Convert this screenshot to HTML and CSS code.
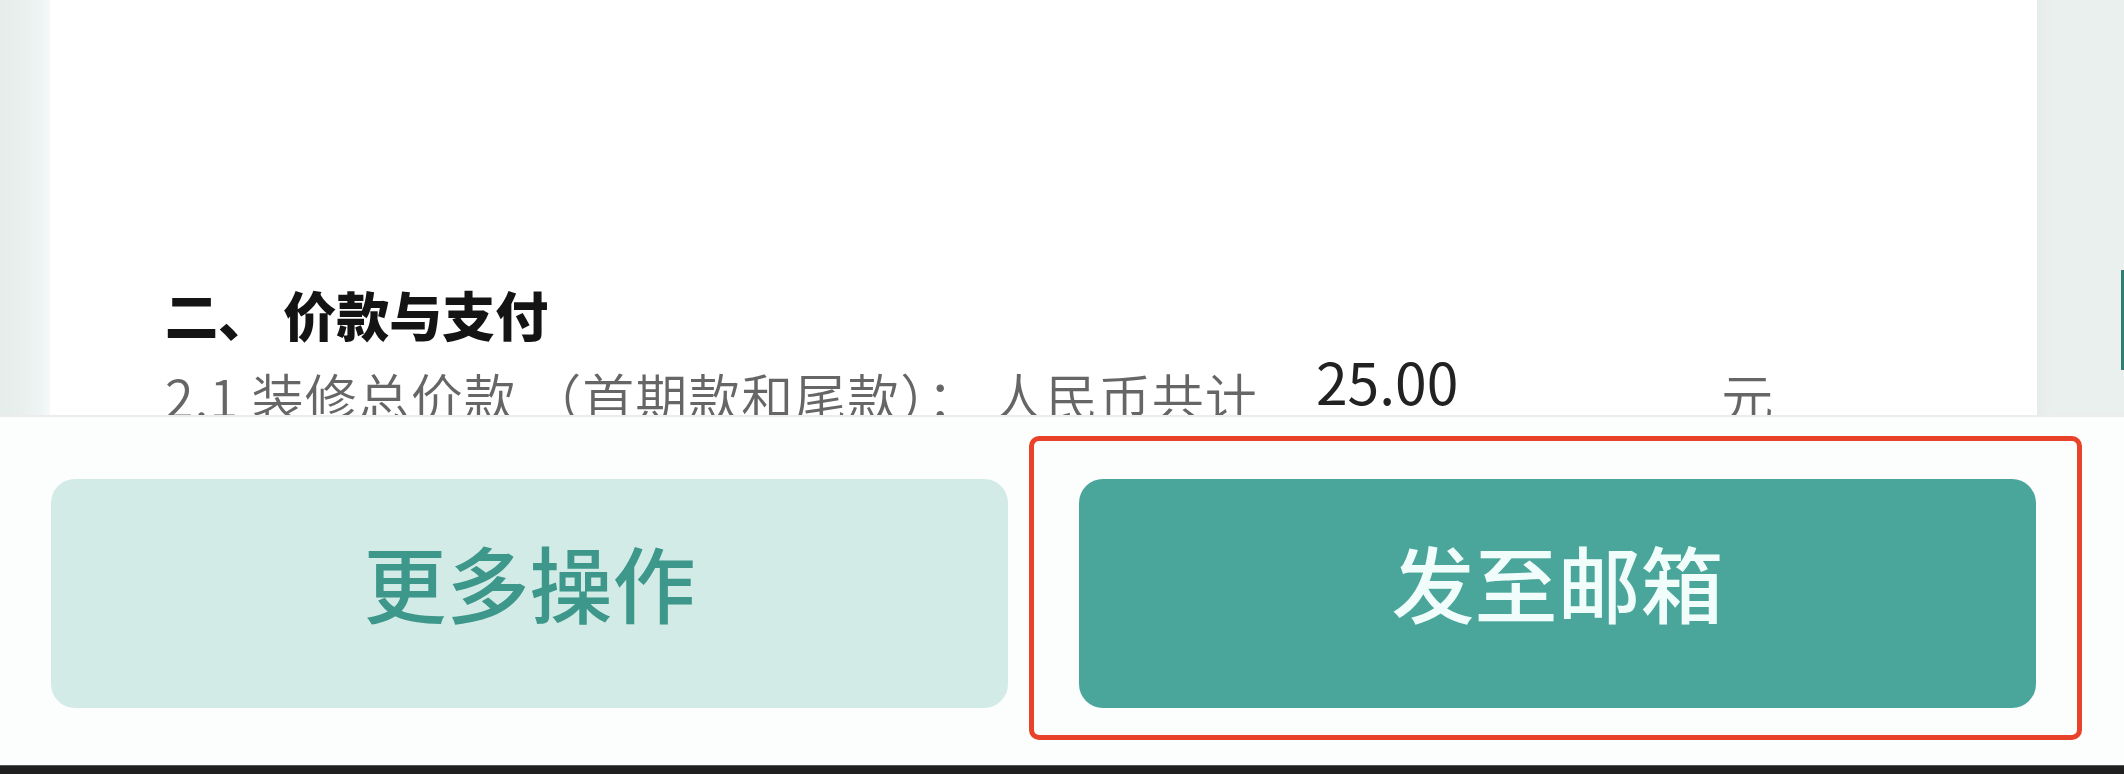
FILE: index.html
```html
<!DOCTYPE html>
<html lang="zh-CN">
<head>
<meta charset="utf-8">
<title>合同预览</title>
<link rel="stylesheet" href="styles.css">
</head>
<body>
<div class="screen">
  <div class="viewer">
    <div class="gutter gutter-left"></div>
    <div class="doc">
      <h2 class="doc-heading">二、 价款与支付</h2>
      <p class="doc-line">2.1 装修总价款 （首期款和尾款）： 人民币共计<span class="doc-value">25.00</span><span class="doc-unit">元</span></p>
    </div>
    <div class="gutter gutter-right"><div class="edge-tab"></div></div>
  </div>
  <div class="actions">
    <button class="btn btn-secondary">更多操作</button>
    <div class="btn-wrap">
      <button class="btn btn-primary">发至邮箱</button>
      <div class="highlight"></div>
    </div>
  </div>
  <div class="home-bar"></div>
</div>
</body>
</html>
```

FILE: styles.css
```css
* { box-sizing: border-box; }
html, body { margin: 0; padding: 0; }
body {
  width: 2124px;
  height: 774px;
  overflow: hidden;
  font-family: "Noto Sans CJK SC", "Noto Sans", sans-serif;
  background: #fcfdfd;
}
.screen {
  display: flex;
  flex-direction: column;
  height: 774px;
}
.viewer {
  display: flex;
  height: 415px;
  background: #e9f0ee;
}
.gutter-left {
  width: 50px;
  background: linear-gradient(to right, #e6eeec 0, #e8efed 20px, #eef4f3 40px, #f6f9f9 50px);
}
.gutter-right {
  width: 87px;
  display: flex;
  flex-direction: column;
  align-items: flex-end;
  background: linear-gradient(to right, #e6ecea 0, #e9f0ee 14px, #e9f0ee 100%);
}
.edge-tab {
  width: 3px;
  height: 100px;
  margin-top: 270px;
  background: #2f7f74;
}
.doc {
  flex: 1;
  background: #ffffff;
  overflow: hidden;
  padding: 288px 0 0 115px;
}
.doc-heading {
  margin: 0;
  font-size: 53px;
  line-height: 1;
  font-weight: 900;
  color: #141414;
}
.doc-line {
  margin: 11px 0 0 0;
  font-size: 52px;
  line-height: 1;
  font-weight: 350;
  letter-spacing: 1px;
  color: #666666;
  white-space: nowrap;
}
.doc-value {
  display: inline-block;
  margin-left: 58px;
  font-size: 57px;
  font-weight: 400;
  letter-spacing: 0;
  color: #222222;
  vertical-align: 13px;
}
.doc-unit {
  display: inline-block;
  margin-left: 263px;
}
.actions {
  display: flex;
  gap: 71px;
  height: 350px;
  padding: 62px 88px 0 51px;
  border-top: 2px solid #ececec;
  background: #fcfdfd;
}
.btn {
  flex: 1;
  height: 229px;
  border: none;
  border-radius: 24px;
  font-family: "Noto Sans CJK SC", "Noto Sans", sans-serif;
  font-size: 83px;
  font-weight: 500;
  line-height: 1;
  padding: 0 0 24px 0;
  display: flex;
  align-items: center;
  justify-content: center;
}
.btn-secondary {
  background: #d3ebe7;
  color: #3d978a;
}
.btn-primary {
  width: 100%;
  background: #4aa59a;
  color: #f0fdfa;
}
.btn-wrap {
  flex: 1;
  position: relative;
  display: flex;
  height: 229px;
}
.highlight {
  position: absolute;
  left: -50px;
  right: -46px;
  top: -43px;
  bottom: -32px;
  border: 5px solid #e8432a;
  border-radius: 10px;
  pointer-events: none;
}
.home-bar {
  height: 9px;
  background: #1f1f1f;
  border-top: 1px solid #555;
}
```
